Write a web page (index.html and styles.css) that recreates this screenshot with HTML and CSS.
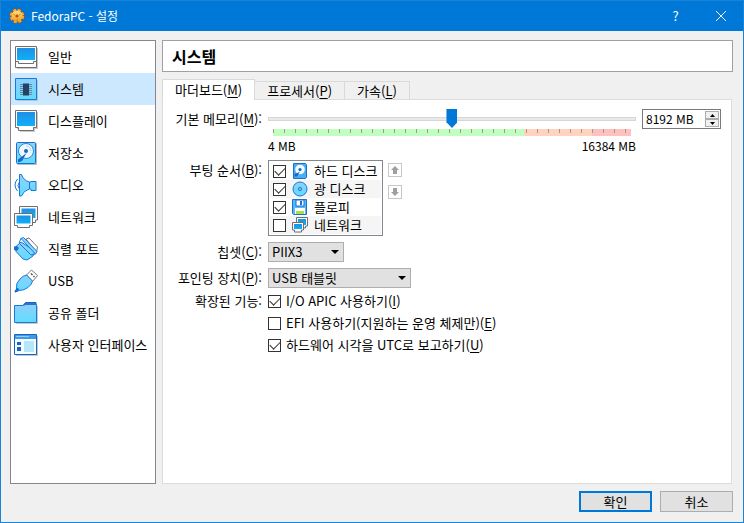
FILE: index.html
```html
<!DOCTYPE html>
<html lang="ko">
<head>
    <meta charset="UTF-8">
    <meta name="viewport" content="width=device-width, initial-scale=1.0">
    <title>FedoraPC - 설정</title>
    <link rel="stylesheet" href="styles.css">
</head>
<body>
    <!-- Shared icons -->
    <svg class="defs" width="0" height="0" aria-hidden="true">
        <defs>
            <linearGradient id="blue" x1="0" y1="0" x2="0" y2="1">
                <stop offset="0" stop-color="#1f8fe6"/>
                <stop offset="1" stop-color="#10b0f8"/>
            </linearGradient>
            <linearGradient id="sky" x1="0" y1="0" x2="0" y2="1">
                <stop offset="0" stop-color="#8fd0fb"/>
                <stop offset="1" stop-color="#5fdcff"/>
            </linearGradient>
            <linearGradient id="orange" x1="0" y1="0" x2="0" y2="1">
                <stop offset="0" stop-color="#ffe27a"/>
                <stop offset="1" stop-color="#f59a23"/>
            </linearGradient>
        </defs>
        <symbol id="icon-disk" viewBox="0 0 24 24">
            <rect x="3" y="2" width="20" height="22" rx="1" fill="#b9b9b9"/>
            <rect x="2.5" y="1.5" width="19" height="21" rx="1" fill="url(#sky)" stroke="#1a6fcf"/>
            <circle cx="12" cy="10" r="7.5" fill="#eefaff" stroke="#2c86d8"/>
            <path d="M12 5a5 5 0 0 1 5 5" fill="none" stroke="#9fd4f5"/>
            <circle cx="12" cy="10" r="2" fill="#1268c8"/>
            <path d="M12.500 12L8 20l-4 1.500v-3l4-3z" fill="#1268c8"/>
        </symbol>
        <symbol id="icon-network" viewBox="0 0 24 24">
            <path d="M5.500 1.500h18v13.500h-2v2.500h-14v-2.500h-2z" fill="#fff" stroke="#6f6f6f"/>
            <rect x="7.500" y="3.500" width="14" height="9.500" fill="url(#blue)"/>
            <path d="M.5 8.500h18v12h-3v2h-12v-2h-3z" fill="#fff" stroke="#6f6f6f"/>
            <rect x="2.500" y="10.500" width="14" height="8" fill="url(#blue)"/>
        </symbol>
        <symbol id="icon-disk-small" viewBox="0 0 16 16">
            <path d="M1.500.5h12l1 1v13l-1 1h-12z" fill="#4aaef2" stroke="#1a6fcf"/>
            <circle cx="8" cy="6.500" r="4.800" fill="#f4fcff"/>
            <circle cx="8" cy="6.500" r="1.600" fill="#1268c8"/>
            <path d="M8 8.500l-3 5H2.500v-2.500l3-1z" fill="#1268c8"/>
        </symbol>
        <symbol id="icon-network-small" viewBox="0 0 16 16">
            <path d="M4.500.5h11v8.500h-2v2h-7v-2h-2z" fill="#fff" stroke="#6f6f6f"/>
            <path d="M6 2h8v6H6z" fill="url(#blue)"/>
            <path d="M.5 5.500h11v7.500h-2v2h-7v-2h-2z" fill="#fff" stroke="#6f6f6f"/>
            <path d="M2 7h8v5H2z" fill="url(#blue)"/>
        </symbol>
    </svg>

    <div class="window">
        <header class="titlebar">
            <svg class="app-icon" viewBox="0 0 16 16" aria-hidden="true">
                <circle cx="8" cy="8" r="5.800" fill="none" stroke="#a83d0c" stroke-width="4" stroke-dasharray="3 1.555"/>
                <circle cx="8" cy="8" r="5.500" fill="none" stroke="#f8a52e" stroke-width="3.500" stroke-dasharray="2.800 1.520"/>
                <circle cx="8" cy="8" r="5.500" fill="url(#orange)"/>
                <circle cx="8" cy="8" r="1.600" fill="#b8500f"/>
                <path d="M4.500 6.200l1.500.800M11.500 6.200l-1.500.800M8 11v1.500" stroke="#e07a16"/>
            </svg>
            <span class="title">FedoraPC - 설정</span>
            <button type="button" class="title-button" aria-label="도움말">?</button>
            <button type="button" class="title-button" aria-label="닫기">
                <svg width="10" height="10" viewBox="0 0 10 10"><path d="M0 0l10 10M10 0L0 10" stroke="#fff" fill="none"/></svg>
            </button>
        </header>

        <div class="content">
            <nav class="sidebar">
                <a href="#general">
                    <svg class="icon" viewBox="0 0 24 24"><path d="M3 3h21v21H3z" fill="#c9c9c9"/><path d="M1.500 1.500h21v21h-21z" fill="#fff" stroke="#6f6f6f"/><path d="M3 3h18v12H3z" fill="url(#blue)"/><path d="M1.500 16.500h3v2h15v-2h3" fill="none" stroke="#6f6f6f"/></svg>
                    일반
                </a>
                <a href="#system" class="active">
                    <svg class="icon" viewBox="0 0 24 24"><path d="M3 3h21v21H3z" fill="#b4c6d6"/><path d="M1.500 1.500h21v21h-21z" fill="url(#sky)" stroke="#1a78d6"/><path d="M6 7.500h12M6 9.500h12M6 11.500h12M6 13.500h12M6 15.500h12M6 17.500h12" stroke="#65869c"/><path d="M9 6.500h6v12H9z" fill="#244263"/></svg>
                    시스템
                </a>
                <a href="#display">
                    <svg class="icon" viewBox="0 0 24 24"><path d="M3 3h21v17h-3v3H6v-3H3z" fill="#c9c9c9"/><path d="M1.500 1.500h21v17h-3v3h-15v-3h-3z" fill="#fff" stroke="#6f6f6f"/><path d="M3 3h18v14H3z" fill="url(#blue)"/></svg>
                    디스플레이
                </a>
                <a href="#storage">
                    <svg class="icon"><use href="#icon-disk"/></svg>
                    저장소
                </a>
                <a href="#audio">
                    <svg class="icon" viewBox="0 0 24 24"><path d="M3.500 6q-5 6 0 12M5 9.500q-2 3 0 6" fill="none" stroke="#1a78d6"/><path d="M5.500 1.500h2q2 6 8 7.500v7q-6 1.500-8 7h-2z" fill="url(#sky)" stroke="#1a78d6"/><path d="M15.500 9h1.500v-.500h5v9h-5V16h-1.500z" fill="url(#sky)" stroke="#1a78d6"/></svg>
                    오디오
                </a>
                <a href="#network">
                    <svg class="icon"><use href="#icon-network"/></svg>
                    네트워크
                </a>
                <a href="#serial">
                    <svg class="icon" viewBox="0 0 24 24"><path d="M12 2l3-1 8.500 9-1 5z" fill="#fff" stroke="#777"/><path d="M7 5L2 9.500v5L9 22l4 1 6-4 2-5z" fill="url(#sky)" stroke="#1a78d6"/><path d="M7 1.500l2.500-1 13.500 14-1.500 2.500z" fill="#8fd8fc" stroke="#1a78d6"/><path d="M7 1.500L5 6l12 12 4.500-1" fill="none" stroke="#1a78d6"/><path d="M0 9.500l3-.500 2 2-2 3-3-1z" fill="#1a6fcf"/></svg>
                    직렬 포트
                </a>
                <a href="#usb">
                    <svg class="icon" viewBox="0 0 24 24"><path d="M12.500 6l5-5 6 5.500-5 6z" fill="#fff" stroke="#777"/><path d="M17 4.500l1.500 1.500M19.500 7l1 1" stroke="#555" stroke-width="1.500"/><path d="M1.500 22l1-2q-1-6 3.500-10Q9 6.500 12.500 6l6 6q-1 4-4.500 6.500-4 3-9 3l-2 1z" fill="url(#sky)" stroke="#1a78d6"/><path d="M1 23l3.500-3.500" stroke="#1268c8" stroke-width="2"/></svg>
                    USB
                </a>
                <a href="#shared">
                    <svg class="icon" viewBox="0 0 24 24"><path d="M9.500 4l2-2.500h10.500V5z" fill="#2b74d0" stroke="#1a62bd"/><path d="M2 5h22v18H2z" fill="#c9c9c9"/><path d="M.5 4.500h9l2-1h11v18H.5z" fill="url(#sky)" stroke="#1a78d6"/></svg>
                    공유 폴더
                </a>
                <a href="#ui">
                    <svg class="icon" viewBox="0 0 24 24"><path d="M2 3h22v20H2z" fill="#c9c9c9"/><path d="M.5 1.500h22v20H.5z" fill="#f2fbff" stroke="#1a62bd"/><path d="M1 2h21v4H1z" fill="#3d9bea"/><path d="M2 3.500h13" stroke="#8fd0fb"/><path d="M3 9h4v3H3zM3 14h4v4H3z" fill="#1a62bd"/><path d="M10 8h10v11H10z" fill="#b5e7fb"/></svg>
                    사용자 인터페이스
                </a>
            </nav>

            <main class="panel">
                <h1>시스템</h1>
                <div class="tabs" role="tablist">
                    <button type="button" role="tab" class="tab selected" aria-selected="true">마더보드(<u>M</u>)</button>
                    <button type="button" role="tab" class="tab">프로세서(<u>P</u>)</button>
                    <button type="button" role="tab" class="tab">가속(<u>L</u>)</button>
                </div>

                <form class="pane" id="settings">
                    <label class="name" for="memory">기본 메모리(<u>M</u>):</label>
                    <div class="memory">
                        <div class="memory-slider">
                            <input type="range" id="memory" min="4" max="16384" value="8192">
                            <div class="scale"></div>
                            <div class="limits"><span>4 MB</span><span>16384 MB</span></div>
                        </div>
                        <div class="spin">
                            <input type="text" value="8192 MB" aria-label="기본 메모리">
                            <div class="spin-buttons">
                                <button type="button" aria-label="늘리기"><svg width="5" height="3" viewBox="0 0 5 3"><path d="M0 3l2.500-3L5 3z"/></svg></button>
                                <button type="button" aria-label="줄이기"><svg width="5" height="3" viewBox="0 0 5 3"><path d="M0 0h5L2.500 3z"/></svg></button>
                            </div>
                        </div>
                    </div>

                    <span class="name">부팅 순서(<u>B</u>):</span>
                    <div class="boot">
                        <div class="boot-list">
                            <label><input type="checkbox" checked><svg class="small-icon"><use href="#icon-disk-small"/></svg>하드 디스크</label>
                            <label><input type="checkbox" checked><svg class="small-icon" viewBox="0 0 16 16"><circle cx="8" cy="8" r="7" fill="url(#sky)" stroke="#1a78d6"/><circle cx="8" cy="8" r="2" fill="#1a78d6"/><circle cx="8" cy="8" r=".8" fill="#fff"/></svg>광 디스크</label>
                            <label><input type="checkbox" checked><svg class="small-icon" viewBox="0 0 16 16"><path d="M.5.5h14v15h-13l-1-1z" fill="#56b8f5" stroke="#1a6fcf"/><path d="M4 1h8v6H4z" fill="#fff" stroke="#1a6fcf"/><path d="M8 2h2v4H8z" fill="#1a6fcf"/><path d="M3 9h10v6H3z" fill="#fff"/><path d="M4 12h8v3H4z" fill="#a6e04a"/></svg>플로피</label>
                            <label><input type="checkbox"><svg class="small-icon"><use href="#icon-network-small"/></svg>네트워크</label>
                        </div>
                        <div class="boot-order">
                            <button type="button" aria-label="위로"><svg width="8" height="8" viewBox="0 0 8 8"><path d="M4 0l4 4H6v4H2V4H0z"/></svg></button>
                            <button type="button" aria-label="아래로"><svg width="8" height="8" viewBox="0 0 8 8"><path d="M4 8L0 4h2V0h4v4h2z"/></svg></button>
                        </div>
                    </div>

                    <label class="name" for="chipset">칩셋(<u>C</u>):</label>
                    <div class="select chipset">
                        <select id="chipset"><option>PIIX3</option><option>ICH9</option></select>
                    </div>

                    <label class="name" for="pointing">포인팅 장치(<u>P</u>):</label>
                    <div class="select pointing">
                        <select id="pointing"><option>USB 태블릿</option></select>
                    </div>

                    <span class="name features-name">확장된 기능:</span>
                    <div class="features">
                        <label><input type="checkbox" checked><span>I/O APIC 사용하기(<u>I</u>)</span></label>
                        <label><input type="checkbox"><span>EFI 사용하기(지원하는 운영 체제만)(<u>E</u>)</span></label>
                        <label><input type="checkbox" checked><span>하드웨어 시각을 UTC로 보고하기(<u>U</u>)</span></label>
                    </div>
                </form>
            </main>
        </div>

        <footer class="actions">
            <button type="submit" form="settings" class="default">확인</button>
            <button type="button">취소</button>
        </footer>
    </div>
</body>
</html>
```

FILE: styles.css
```css
* {
    box-sizing: border-box;
}

body {
    margin: 0;
    font-family: "Noto Sans CJK KR", sans-serif;
    font-size: 13px;
    line-height: 18px;
    color: #000;
}

button, input, select {
    font: inherit;
    color: inherit;
    margin: 0;
    padding: 0;
}

u {
    text-underline-offset: 2px;
}

.defs {
    position: absolute;
}

.window {
    display: flex;
    flex-direction: column;
    min-height: 100vh;
    background: #f0f0f0;
    border: 1px solid #1883d7;
}

/* Title bar */
.titlebar {
    display: flex;
    align-items: center;
    height: 30px;
    padding-left: 8px;
    background: #0078d7;
    color: #fff;
}

.app-icon {
    width: 16px;
    height: 16px;
    margin-right: 6px;
}

.title {
    flex: 1;
    font-size: 12px;
}

.title-button {
    display: flex;
    align-items: center;
    justify-content: center;
    width: 45px;
    height: 30px;
    border: none;
    background: none;
}

.content {
    display: flex;
    flex: 1;
    gap: 6px;
    padding: 9px 10px 0 9px;
}

/* Category list */
.sidebar {
    width: 146px;
    flex-shrink: 0;
    background: #fff;
    border: 1px solid #828790;
}

.sidebar a {
    display: flex;
    align-items: center;
    gap: 10px;
    height: 32px;
    padding-left: 3px;
    color: #000;
    text-decoration: none;
    white-space: nowrap;
}

.sidebar a.active {
    background: #cce8ff;
}

.icon {
    width: 24px;
    height: 24px;
}

/* Settings page */
.panel {
    display: flex;
    flex-direction: column;
    flex: 1;
    min-width: 0;
}

.panel h1 {
    margin: 0 0 7px;
    padding: 0 9px;
    height: 32px;
    line-height: 30px;
    font-size: 16px;
    font-weight: bold;
    background: #fff;
    border: 1px solid #a0a0a0;
}

.tabs {
    display: flex;
    align-items: flex-end;
    height: 20px;
}

.tab {
    height: 18px;
    padding: 0 12px;
    background: #f0f0f0;
    border: 1px solid #d9d9d9;
    border-left: none;
    border-bottom: none;
    line-height: 16px;
}

.tab.selected {
    position: relative;
    height: 21px;
    margin-bottom: -1px;
    border-left: 1px solid #d9d9d9;
    background: #fff;
}

.pane {
    display: grid;
    grid-template-columns: 94px 1fr;
    align-content: start;
    gap: 6px;
    flex: 1;
    margin-right: 1px;
    padding: 9px 10px 10px 5px;
    background: #fff;
    border: 1px solid #dcdcdc;
}

.name {
    line-height: 20px;
    text-align: right;
    white-space: nowrap;
}

/* Memory */
.memory {
    display: flex;
    align-items: flex-start;
    gap: 6px;
}

.memory-slider {
    flex: 1;
}

#memory {
    display: block;
    width: 100%;
    height: 20px;
    appearance: none;
    background: none;
}

#memory::-webkit-slider-runnable-track {
    height: 4px;
    background: #e7eaea;
    border: 1px solid #d6d6d6;
}

#memory::-webkit-slider-thumb {
    appearance: none;
    width: 11px;
    height: 19px;
    margin-top: -9px;
    background: #0078d7;
    clip-path: polygon(0 0, 100% 0, 100% 70%, 50% 100%, 0 70%);
}

.scale {
    height: 7px;
    margin: 0 5px;
    background:
        repeating-linear-gradient(to right, #a09c88 0, #a09c88 1px, transparent 1px, transparent 11px) top / 100% 4px no-repeat,
        linear-gradient(to right, #c0ffc0 70%, #ffd3c0 70%, #ffd3c0 89%, #ffc0c0 89%);
}

.limits {
    display: flex;
    justify-content: space-between;
    margin-top: 2px;
    font-size: 12px;
    line-height: 16px;
}

.spin {
    display: flex;
    width: 79px;
    height: 20px;
    padding: 1px;
    border: 1px solid #7a7a7a;
}

.spin input {
    flex: 1;
    min-width: 0;
    padding-left: 2px;
    border: none;
    background: none;
    font-size: 12px;
    line-height: 16px;
}

.spin-buttons {
    display: flex;
    flex-direction: column;
    width: 14px;
}

.spin-buttons button {
    display: flex;
    align-items: center;
    justify-content: center;
    flex: 1;
    background: #f0f0f0;
    border: 1px solid #acacac;
}

/* Check boxes */
input[type="checkbox"] {
    display: grid;
    place-items: center;
    flex-shrink: 0;
    width: 13px;
    height: 13px;
    appearance: none;
    background: #fff;
    border: 1px solid #333;
}

input[type="checkbox"]:checked::before {
    content: "";
    width: 9px;
    height: 5px;
    margin-top: -3px;
    border-left: 1px solid #333;
    border-bottom: 1px solid #333;
    transform: rotate(-45deg);
}

/* Boot order */
.boot {
    display: flex;
    gap: 5px;
}

.boot-list {
    width: 115px;
    padding: 1px;
    border: 1px solid #828790;
}

.boot-list label {
    display: flex;
    align-items: center;
    height: 18px;
    padding-left: 3px;
    white-space: nowrap;
}

.boot-list label:nth-child(even) {
    background: #f5f5f5;
}

.small-icon {
    width: 16px;
    height: 16px;
    margin: 0 6px;
}

.boot-order {
    display: flex;
    flex-direction: column;
    gap: 8px;
    padding-top: 3px;
}

.boot-order button {
    display: flex;
    align-items: center;
    justify-content: center;
    width: 14px;
    height: 14px;
    background: #fff;
    border: 1px solid #c8c8c8;
    fill: #a0a0a0;
}

/* Drop-downs */
.select {
    position: relative;
    height: 20px;
}

.select select {
    display: block;
    width: 100%;
    height: 20px;
    padding-left: 3px;
    line-height: 18px;
    appearance: none;
    background: #e1e1e1;
    border: 1px solid #adadad;
    border-radius: 0;
}

.select::after {
    content: "";
    position: absolute;
    top: 8px;
    right: 5px;
    border: 4px solid transparent;
    border-top-color: #000;
    border-bottom: none;
    pointer-events: none;
}

.chipset {
    width: 76px;
}

.pointing {
    width: 143px;
}

.features-name {
    line-height: 14px;
}

.features {
    display: flex;
    flex-direction: column;
    align-items: flex-start;
    gap: 8px;
}

.features label {
    display: flex;
    align-items: center;
    gap: 5px;
    height: 14px;
}

/* Dialog buttons */
.actions {
    display: flex;
    justify-content: flex-end;
    gap: 8px;
    padding: 7px 10px 10px;
}

.actions button {
    width: 73px;
    height: 21px;
    line-height: 17px;
    background: #e1e1e1;
    border: 1px solid #adadad;
}

.actions .default {
    border: 2px solid #0078d7;
}
```
